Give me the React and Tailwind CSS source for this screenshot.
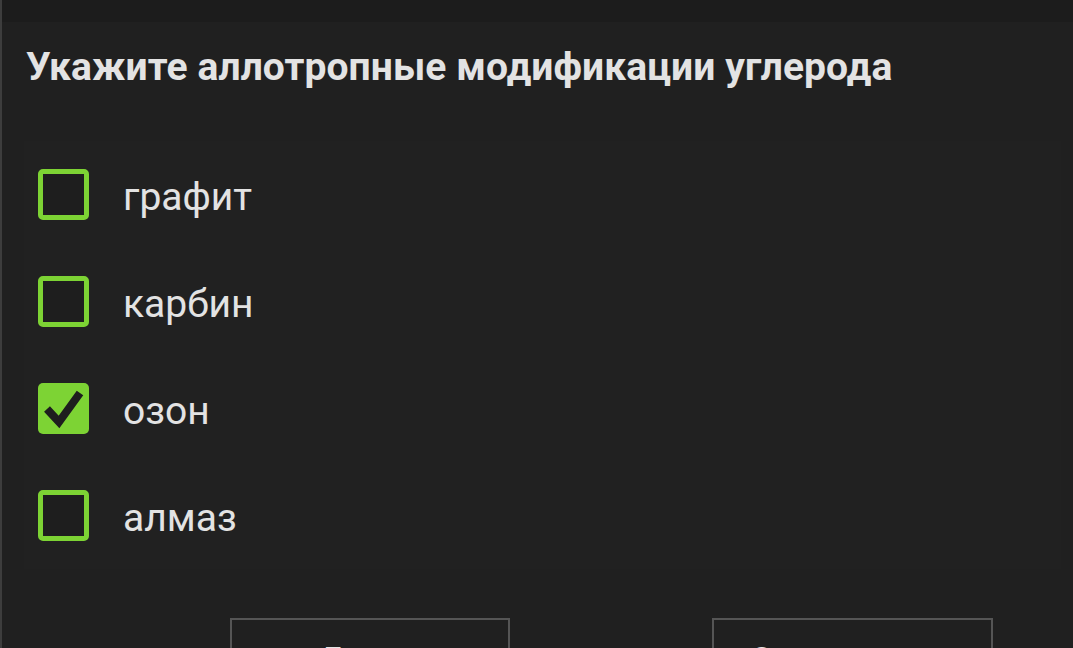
import React from "react";

const options = [
  { label: "графит", checked: false },
  { label: "карбин", checked: false },
  { label: "озон", checked: true },
  { label: "алмаз", checked: false },
];

function Box({ checked }) {
  if (checked) {
    return (
      <div className="w-[51px] h-[51px] shrink-0 rounded-[5px] bg-[#7dd334] flex items-center justify-center">
        <svg width="51" height="51" viewBox="0 0 51 51">
          <polyline
            points="9,26 21,39 42,10"
            fill="none"
            stroke="#1e1e1e"
            strokeWidth="8"
            strokeLinecap="butt"
            strokeLinejoin="miter"
          />
        </svg>
      </div>
    );
  }
  return (
    <div className="w-[51px] h-[51px] shrink-0 rounded-[5px] border-[5px] border-[#7dd334] bg-[#1e1e1e]" />
  );
}

export default function App() {
  return (
    <div className="h-[648px] w-[1073px] overflow-hidden bg-[#202020] border-l-2 border-[#3d3d3d] font-['Roboto',sans-serif]">
      <div className="h-[22px] bg-[#1c1c1c]" />
      <h1 className="pl-6 pt-[23px] text-[39px] leading-[44px] font-bold text-[#e3e3e3] tracking-[0.1px]">
        Укажите аллотропные модификации углерода
      </h1>
      <div className="mt-[52px] ml-[22px] mr-[12px] bg-[#212121]">
        {options.map((o) => (
          <div key={o.label} className="h-[107px] flex items-center pl-[14px] gap-[34px]">
            <Box checked={o.checked} />
            <span className="pt-[6px] text-[39px] leading-none text-[#e3e3e3]">{o.label}</span>
          </div>
        ))}
      </div>
      <div className="mt-[49px] flex pl-[228px] gap-[202px]">
        <div className="w-[280px] h-[80px] border-2 border-[#555555] flex justify-start pl-[87px] pt-[14px] text-[34px] leading-[51px] text-[#e3e3e3]">
          Далее
        </div>
        <div className="w-[281px] h-[80px] border-2 border-[#555555] flex justify-start pl-[36px] pt-[14px] text-[34px] leading-[51px] text-[#e3e3e3]">
          Ответить
        </div>
      </div>
    </div>
  );
}
